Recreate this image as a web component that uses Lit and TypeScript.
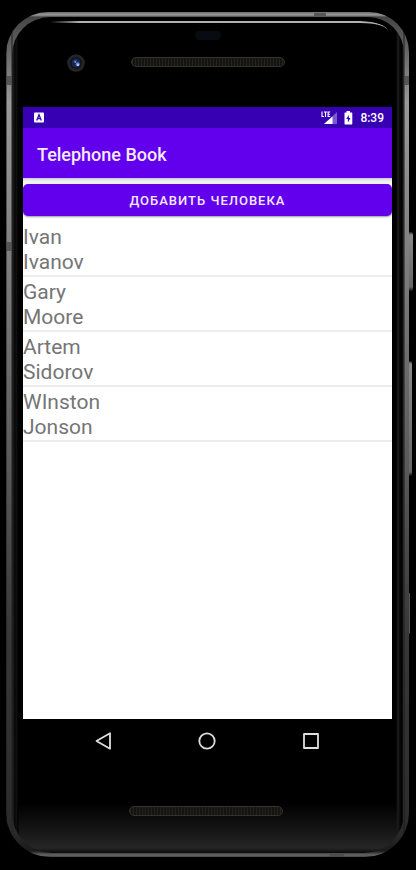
import { LitElement, html, css } from "lit";
import { customElement, property } from "lit/decorators.js";

interface Person {
  first: string;
  last: string;
}

@customElement("phone-frame")
class PhoneFrame extends LitElement {
  static styles = css`
    :host {
      position: relative;
      display: flex;
      flex: 1;
      min-width: 0;
    }
    .rim {
      position: relative;
      flex: 1;
      display: flex;
      min-width: 0;
      padding: 5px 5px 4px 6px;
      border-radius: 42px 40px 44px 44px;
      background:
        linear-gradient(to right, #1b1b1b 0, transparent 1px, transparent 5px, #222 6px, transparent 7px, transparent calc(100% - 6px), #1c1c1c calc(100% - 5px), transparent calc(100% - 4px)),
        linear-gradient(to bottom, #6d6f6c 0, #999 3px, #454545 5px, #999 90px, #808080 240px, #606060 420px, #383838 620px, #2b2b2b 820px, #1a1a1a calc(100% - 6px), #666 calc(100% - 2px), #444 100%);
    }
    .body {
      flex: 1;
      min-width: 0;
      position: relative;
      display: flex;
      flex-direction: column;
      padding: 0 12px 0 11px;
      border-radius: 38px 36px 40px 40px;
      background:
        linear-gradient(to right, #222 0, #151515 2px, #000 3px, #151515 4px, #000 6px, transparent 7px, transparent calc(100% - 8px), #1b1b1b calc(100% - 6px), #090909 calc(100% - 4px), #000 calc(100% - 2px), #333 100%),
        linear-gradient(to top, #0b0b0b 0, #262626 5px, #161616 22px, #000 50px);
    }
    .shine {
      position: absolute;
      top: 4px;
      left: 38px;
      right: 16px;
      height: 9px;
      border-top: 2px solid #b0b0b0;
      border-radius: 0 28px 0 0 / 0 10px 0 0;
      -webkit-mask-image: linear-gradient(to right, transparent, #000 30px);
      mask-image: linear-gradient(to right, transparent, #000 30px);
    }
    .top {
      height: 90px;
      flex: none;
      display: grid;
      grid-template-columns: 1fr auto 1fr;
      align-items: center;
      position: relative;
    }
    .camera {
      width: 18px;
      height: 18px;
      margin-left: 44px;
      margin-top: 2px;
    }
    .sensor {
      position: absolute;
      top: 14px;
      left: calc(50% - 13px);
      width: 26px;
      height: 9px;
      border-radius: 5px;
      background: #090b12;
    }
    .speaker {
      box-sizing: border-box;
      width: 154px;
      height: 10px;
      border: 1px solid #34322f;
      border-radius: 5px;
      background: repeating-linear-gradient(to right, #25221c 0 1px, #151411 1px 3px);
    }
    .screen {
      flex: 1;
      min-width: 0;
      display: flex;
      flex-direction: column;
    }
    .bottom {
      height: 90px;
      flex: none;
      display: flex;
      justify-content: center;
      align-items: center;
    }
    .bottom .speaker {
      margin: 6px 4px 0 0;
    }
    .key {
      position: absolute;
      right: -4px;
      width: 4px;
      border-radius: 0 2px 2px 0;
      background: linear-gradient(to bottom, #222 0, #888 3px, #666 calc(100% - 4px), #111);
    }
    .power { top: 220px; height: 59px; }
    .volume { top: 349px; height: 115px; right: -3px; }
    .edge { top: 581px; height: 41px; right: -1px; width: 1px; background: #555; }
    .seam {
      position: absolute;
      background: #4a4a4a;
      opacity: 0.8;
    }
    .left-high { left: 0; top: 64px; width: 6px; height: 9px; }
    .right-high { right: 0; top: 64px; width: 5px; height: 9px; }
    .left-mid { left: 0; top: 230px; width: 6px; height: 9px; }
    .top-right { right: 83px; top: 1px; width: 12px; height: 3px; }
    .bottom-right { right: 65px; bottom: 0; width: 14px; height: 4px; }
  `;

  render() {
    return html`
      <span class="key power"></span>
      <span class="key volume"></span>
      <span class="key edge"></span>
      <div class="rim">
        <span class="seam left-high"></span>
        <span class="seam right-high"></span>
        <span class="seam left-mid"></span>
        <span class="seam top-right"></span>
        <span class="seam bottom-right"></span>
        <div class="body">
          <span class="shine"></span>
          <div class="top">
            <svg class="camera" viewBox="0 0 18 18" aria-hidden="true">
              <circle cx="9" cy="9" r="8.8" fill="#252525" />
              <circle cx="9" cy="9" r="6" fill="#10121f" />
              <circle cx="9" cy="9" r="4.5" fill="#17264f" />
              <path d="M6 8q1-3 4-2l-1 3z" fill="#314a91" />
              <circle cx="10.7" cy="10.3" r="2" fill="#6584c9" />
              <circle cx="11" cy="11" r="1" fill="#c4d4f6" />
              <circle cx="8.3" cy="8" r=".8" fill="#9cb1e4" />
            </svg>
            <span class="sensor"></span>
            <span class="speaker"></span>
          </div>
          <div class="screen"><slot></slot></div>
          <div class="bottom"><span class="speaker"></span></div>
        </div>
      </div>
    `;
  }
}

@customElement("person-list")
class PersonList extends LitElement {
  @property({ attribute: false }) people: Person[] = [];

  static styles = css`
    ul {
      margin: 0;
      padding: 0;
      list-style: none;
    }
    li {
      padding-top: 3px;
      border-bottom: 2px solid #ececec;
      font-size: 21px;
      line-height: 25px;
      color: #757575;
    }
    span {
      display: block;
    }
  `;

  render() {
    return html`<ul>
      ${this.people.map(
        (p) => html`<li><span>${p.first}</span><span>${p.last}</span></li>`
      )}
    </ul>`;
  }
}

@customElement("app-root")
class AppRoot extends LitElement {
  private people: Person[] = [
    { first: "Ivan", last: "Ivanov" },
    { first: "Gary", last: "Moore" },
    { first: "Artem", last: "Sidorov" },
    { first: "WInston", last: "Jonson" },
  ];

  static styles = css`
    :host {
      box-sizing: border-box;
      display: flex;
      min-height: 100vh;
      padding: 12px 7px 13px 6px;
      background: #000;
      font-family: Roboto, "Noto Sans", sans-serif;
    }
    .status {
      display: flex;
      align-items: center;
      height: 21px;
      padding: 0 8px 0 11px;
      background: #3700b3;
      color: #fff;
      font-size: 12px;
      font-weight: 500;
    }
    .status svg {
      display: block;
    }
    .signal {
      margin-left: auto;
      margin-right: 7px;
    }
    .battery {
      margin-right: 7px;
    }
    .title {
      display: flex;
      align-items: center;
      height: 50px;
      padding: 2px 14px 0;
      box-sizing: border-box;
      background: #6200ee;
      color: #f5eaff;
    }
    h1 {
      margin: 0;
      font-size: 18px;
      font-weight: 500;
    }
    main {
      flex: 1;
      padding-top: 6px;
      background: linear-gradient(to bottom, #c9c6ce 0, #e9e8eb 2px, #f4f4f4 5px, #fff 8px);
    }
    .add {
      display: block;
      width: 100%;
      height: 32px;
      margin-bottom: 6px;
      padding: 0;
      border: 0;
      border-radius: 5px;
      background: #6200ee;
      box-shadow: 0 1px 2px #00000066;
      color: #f5eaff;
      font: 500 13px Roboto, "Noto Sans", sans-serif;
      letter-spacing: 1px;
    }
    nav {
      display: flex;
      justify-content: center;
      gap: 80px;
      padding: 10px 2px 10px 0;
    }
    nav button {
      width: 24px;
      height: 24px;
      padding: 0;
      border: 0;
      background: none;
    }
    nav svg {
      display: block;
      fill: none;
      stroke: #dedede;
      stroke-width: 1.8;
      stroke-linejoin: round;
    }
  `;

  render() {
    return html`
      <phone-frame>
        <div class="status">
          <svg width="10" height="11" viewBox="0 0 10 11" aria-hidden="true">
            <rect y=".5" width="10" height="10" rx="1" fill="#fff" />
            <path d="M2.7 8.5 5 2.8l2.3 5.7M3.6 6.7h2.8" fill="none" stroke="#3700b3" stroke-width="1.3" />
          </svg>
          <svg class="signal" width="16" height="14" viewBox="0 0 16 14" aria-hidden="true">
            <path d="M16 1v12H3z" fill="#fff" opacity=".35" />
            <path d="M11.5 5.5V13H3z" fill="#fff" />
            <path d="M1 .5v5h2M2.8 1h3.4M4.5 1v5M9.2 1H7.1v4.5h2.1M7.1 3.2h1.8" fill="none" stroke="#fff" stroke-width="1.1" />
          </svg>
          <svg class="battery" width="9" height="14" viewBox="0 0 9 14" aria-hidden="true">
            <path d="M2.5 0h3.5v1.5h1.6q.7 0 .7.7v10.6q0 .7-.7.7H1.2q-.7 0-.7-.7V2.2q0-.7.7-.7h1.3z" fill="#fff" />
            <path d="M4.8 3.8 2.3 8h1.6v3.4L6.5 7H4.8z" fill="#3700b3" />
          </svg>
          <time>8:39</time>
        </div>
        <header class="title"><h1>Telephone Book</h1></header>
        <main>
          <button class="add" type="button">ДОБАВИТЬ ЧЕЛОВЕКА</button>
          <person-list .people=${this.people}></person-list>
        </main>
        <nav aria-label="System">
          <button type="button" aria-label="Back">
            <svg width="24" height="24" viewBox="0 0 24 24"><path d="M19 4.3v15.4L5.5 12z" /></svg>
          </button>
          <button type="button" aria-label="Home">
            <svg width="24" height="24" viewBox="0 0 24 24"><circle cx="12" cy="12" r="7.7" /></svg>
          </button>
          <button type="button" aria-label="Overview">
            <svg width="24" height="24" viewBox="0 0 24 24"><rect x="5" y="5" width="14" height="14" /></svg>
          </button>
        </nav>
      </phone-frame>
    `;
  }
}
